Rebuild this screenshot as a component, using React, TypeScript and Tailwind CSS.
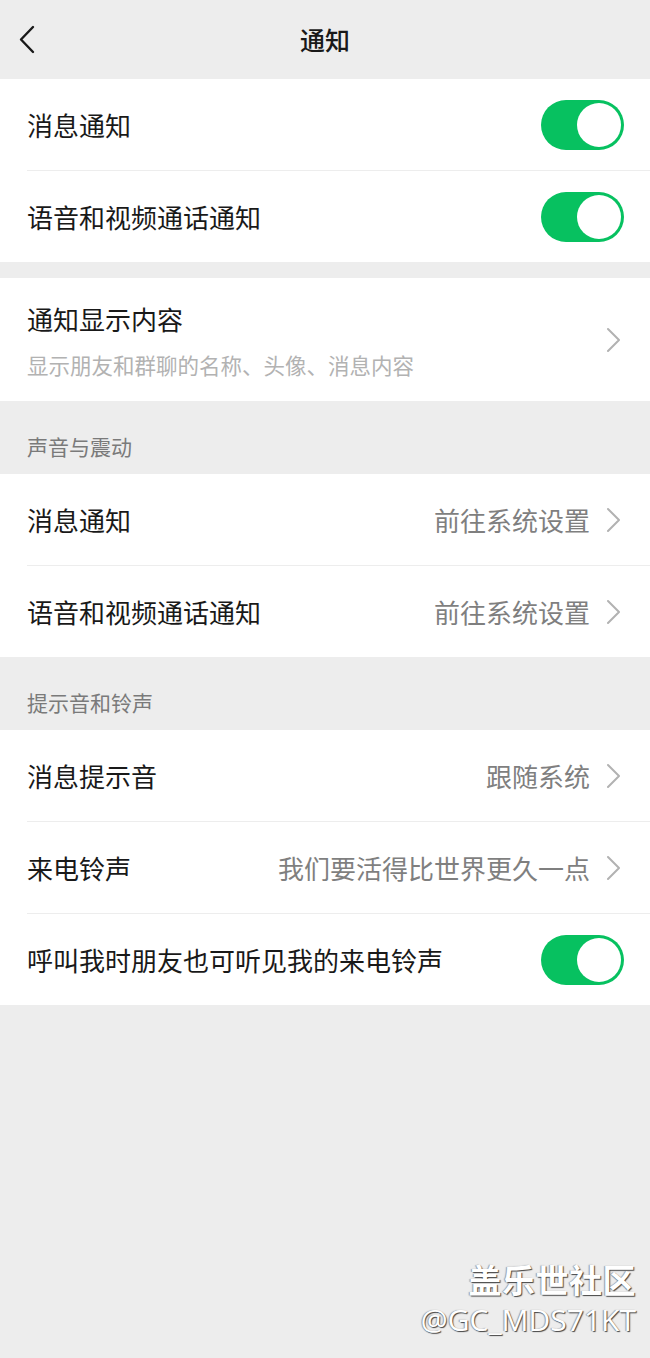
import React from 'react';

const font = { fontFamily: '"Noto Sans CJK SC", "Noto Sans", sans-serif' };

function Toggle() {
  return (
    <div className="relative h-[50px] w-[83px] rounded-full bg-[#07c160]">
      <div className="absolute right-[3px] top-[3px] h-[44px] w-[44px] rounded-full bg-white" />
    </div>
  );
}

function Chevron() {
  return (
    <svg width="14" height="26" viewBox="0 0 14 26" className="ml-[16px] mr-[4px] shrink-0">
      <path d="M2 2 L13 13 L2 24" fill="none" stroke="#b2b2b2" strokeWidth="2" strokeLinecap="round" strokeLinejoin="round" />
    </svg>
  );
}

interface RowProps {
  label: string;
  value?: string;
  toggle?: boolean;
  divider?: boolean;
}

function Row({ label, value, toggle, divider }: RowProps) {
  return (
    <div className="pl-[27px]">
      {divider && <div className="h-px bg-[#ededed]" />}
      <div className="flex h-[91px] items-center pr-[26px]">
        <span className="flex-1 text-[26px] text-[#191919]">{label}</span>
        {toggle ? (
          <Toggle />
        ) : (
          <>
            <span className="text-[26px] text-[#7f7f7f]">{value}</span>
            <Chevron />
          </>
        )}
      </div>
    </div>
  );
}

function SectionTitle({ text }: { text: string }) {
  return (
    <div className="flex h-[73px] items-center pl-[27px] pt-[18px] text-[21px] text-[#7a7a7a]">
      {text}
    </div>
  );
}

export default function App() {
  return (
    <div className="relative min-h-[1358px] w-[650px] bg-[#ededed]" style={font}>
      <div className="relative flex h-[79px] items-center justify-center">
        <svg width="20" height="30" viewBox="0 0 20 30" className="absolute left-[18px] top-[25px]">
          <path d="M15 2 L3 14.5 L15 27" fill="none" stroke="#191919" strokeWidth="2.4" strokeLinecap="round" strokeLinejoin="round" />
        </svg>
        <span className="text-[25px] font-medium text-[#191919]">通知</span>
      </div>

      <div className="bg-white">
        <Row label="消息通知" toggle />
        <Row label="语音和视频通话通知" toggle divider />
      </div>

      <div className="mt-[16px] flex h-[123px] items-center bg-white pl-[27px] pr-[26px]">
        <div className="flex-1">
          <div className="text-[26px] leading-[36px] text-[#191919]">通知显示内容</div>
          <div className="mt-[14px] text-[21.5px] leading-[28px] text-[#b2b2b2]">显示朋友和群聊的名称、头像、消息内容</div>
        </div>
        <Chevron />
      </div>

      <SectionTitle text="声音与震动" />
      <div className="bg-white">
        <Row label="消息通知" value="前往系统设置" />
        <Row label="语音和视频通话通知" value="前往系统设置" divider />
      </div>

      <SectionTitle text="提示音和铃声" />
      <div className="bg-white">
        <Row label="消息提示音" value="跟随系统" />
        <Row label="来电铃声" value="我们要活得比世界更久一点" divider />
        <Row label="呼叫我时朋友也可听见我的来电铃声" toggle divider />
      </div>

      <div className="absolute bottom-[18px] right-[14px] flex flex-col items-end text-white [text-shadow:1px_1px_1px_#444,-1px_0_1px_#999]">
        <span className="text-[33px] font-bold leading-[42px] tracking-[0.5px]">盖乐世社区</span>
        <span className="text-[30px] leading-[40px]" style={{ fontFamily: '"Open Sans", "Noto Sans", sans-serif' }}>@GC_MDS71KT</span>
      </div>
    </div>
  );
}
